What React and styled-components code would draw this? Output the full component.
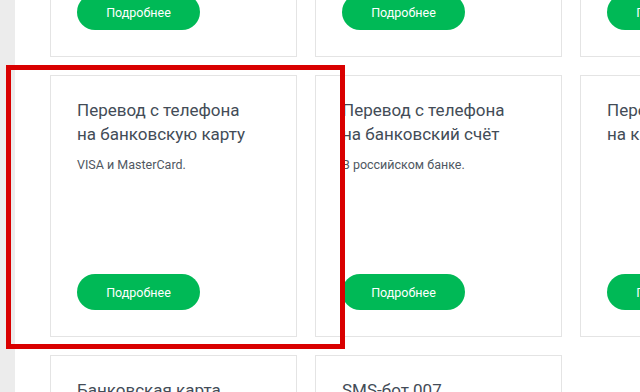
import React from 'react'
import styled, { createGlobalStyle } from 'styled-components'

const GlobalStyle = createGlobalStyle`
  html, body {
    margin: 0;
    padding: 0;
    background: #fff;
    overflow: hidden;
  }
  body {
    font-family: Roboto, "Liberation Sans", sans-serif;
  }
`;

const Page = styled.div`
  position: relative;
  display: flex;
  width: 640px;
  height: 392px;
  overflow: hidden;
`;

const Sidebar = styled.div`
  flex: 0 0 15px;
  background: #ececec;
`;

const Main = styled.main`
  flex: 1;
  padding-left: 35px;
  margin-top: -205px;
`;

const Grid = styled.div`
  display: grid;
  grid-template-columns: repeat(3, 247px);
  grid-auto-rows: 262px;
  gap: 18px;
`;

const Card = styled.div`
  display: flex;
  flex-direction: column;
  align-items: flex-start;
  box-sizing: border-box;
  border: 1px solid #e4e4e4;
  background: #fff;
  padding: 22px 26px 26px 26px;
`;

const Title = styled.h3`
  margin: 0;
  font-size: 17px;
  line-height: 24px;
  font-weight: 400;
  color: #434c57;
  white-space: nowrap;
`;

const Text = styled.p`
  margin: 11px 0 0;
  font-size: 12.5px;
  line-height: 16px;
  color: #4f5862;
  white-space: nowrap;
`;

const Button = styled.button`
  margin-top: auto;
  width: 123px;
  height: 36px;
  border: none;
  border-radius: 18px;
  background: #00b956;
  color: #fff;
  font-family: Roboto, "Liberation Sans", sans-serif;
  font-size: 12.5px;
  font-weight: 400;
  cursor: pointer;
`;

const Highlight = styled.div`
  position: absolute;
  left: 6px;
  top: 65px;
  width: 339px;
  height: 284px;
  box-sizing: border-box;
  border: 5px solid #d90000;
  pointer-events: none;
`;

const cards = [
  { title: ['Мобильный перевод', 'на другой номер'], text: 'Абонентам любых операторов.' },
  { title: ['Перевод на', 'электронный кошелёк'], text: 'Яндекс.Деньги и QIWI.' },
  { title: ['Оплата услуг', 'с мобильного'], text: 'ЖКХ, интернет, ТВ.' },
  { title: ['Перевод с телефона', 'на банковскую карту'], text: 'VISA и MasterCard.' },
  { title: ['Перевод с телефона', 'на банковский счёт'], text: 'В российском банке.' },
  { title: ['Перевод с телефона', 'на карту Мир'] },
  { title: ['Банковская карта', 'МегаФон'], text: 'Кэшбэк на покупки.' },
  { title: ['SMS-бот 007'], text: 'Переводы по SMS.' },
]

export default function App() {
  return (
    <>
      <GlobalStyle />
      <Page>
        <Sidebar />
        <Main>
          <Grid>
            {cards.map((c, i) => (
              <Card key={i}>
                <Title>
                  {c.title.map((line, j) => (
                    <React.Fragment key={j}>
                      {line}
                      {j < c.title.length - 1 && <br />}
                    </React.Fragment>
                  ))}
                </Title>
                {c.text && <Text>{c.text}</Text>}
                <Button>Подробнее</Button>
              </Card>
            ))}
          </Grid>
        </Main>
        <Highlight />
      </Page>
    </>
  )
}
